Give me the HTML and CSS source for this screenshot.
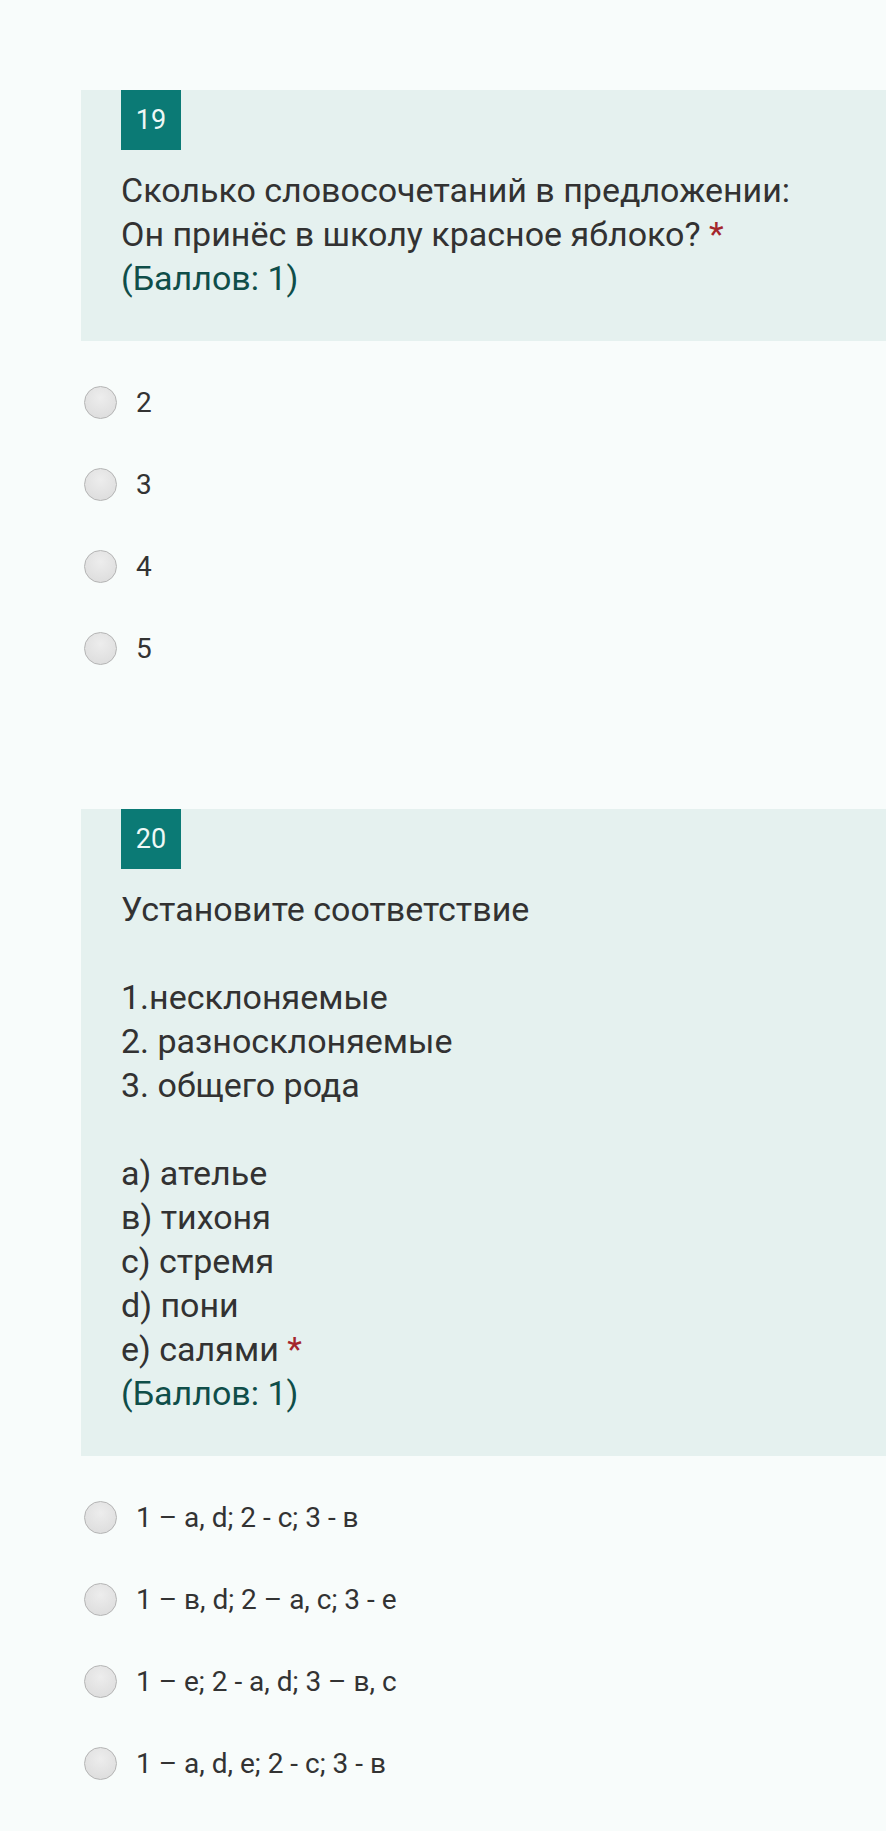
FILE: index.html
```html
<!DOCTYPE html>
<html lang="ru">
<head>
<meta charset="utf-8">
<link rel="stylesheet" href="styles.css">
</head>
<body>
<div class="page">
  <section class="question">
    <div class="card">
      <div class="badge">19</div>
      <div class="qtext">Сколько словосочетаний в предложении:<br>Он принёс в школу красное яблоко? <span class="req">*</span><br><span class="points">(Баллов: 1)</span></div>
    </div>
    <div class="options">
      <label class="option"><span class="radio"></span><span class="otext">2</span></label>
      <label class="option"><span class="radio"></span><span class="otext">3</span></label>
      <label class="option"><span class="radio"></span><span class="otext">4</span></label>
      <label class="option"><span class="radio"></span><span class="otext">5</span></label>
    </div>
  </section>
  <section class="question">
    <div class="card">
      <div class="badge">20</div>
      <div class="qtext">Установите соответствие<br><br>1.несклоняемые<br>2. разносклоняемые<br>3. общего рода<br><br>а) ателье<br>в) тихоня<br>с) стремя<br>d) пони<br>е) салями <span class="req">*</span><br><span class="points">(Баллов: 1)</span></div>
    </div>
    <div class="options">
      <label class="option"><span class="radio"></span><span class="otext">1 – а, d; 2 - с; 3 - в</span></label>
      <label class="option"><span class="radio"></span><span class="otext">1 – в, d; 2 – а, с; 3 - е</span></label>
      <label class="option"><span class="radio"></span><span class="otext">1 – е; 2 - а, d; 3 – в, с</span></label>
      <label class="option"><span class="radio"></span><span class="otext">1 – а, d, е; 2 - с; 3 - в</span></label>
    </div>
  </section>
</div>
</body>
</html>
```
FILE: styles.css
```css
html, body {
  margin: 0;
  padding: 0;
  background: #f8fcfb;
  font-family: Roboto, "Noto Sans", sans-serif;
  color: #333333;
}
.page {
  padding-top: 90px;
}
.question + .question {
  margin-top: 120px;
}
.card {
  margin-left: 81px;
  background: #e5f1ef;
  padding: 0 0 41px 40px;
}
.badge {
  width: 60px;
  height: 60px;
  background: #0b7a75;
  color: #eef8f6;
  font-size: 27px;
  display: flex;
  align-items: center;
  justify-content: center;
}
.qtext {
  margin-top: 18px;
  font-size: 34px;
  line-height: 44px;
  color: #323232;
}
.req {
  color: #a4262c;
}
.points {
  color: #0f4e49;
}
.options {
  margin-top: 20px;
  padding-left: 84px;
  display: flex;
  flex-direction: column;
}
.option {
  height: 82px;
  display: flex;
  align-items: center;
}
.radio {
  width: 31px;
  height: 31px;
  border-radius: 50%;
  border: 1px solid #b4b4b4;
  background: radial-gradient(circle at 50% 35%, #ededed 0%, #dadada 100%);
  flex: none;
}
.otext {
  margin-left: 19px;
  font-size: 28px;
  color: #333333;
}
```
